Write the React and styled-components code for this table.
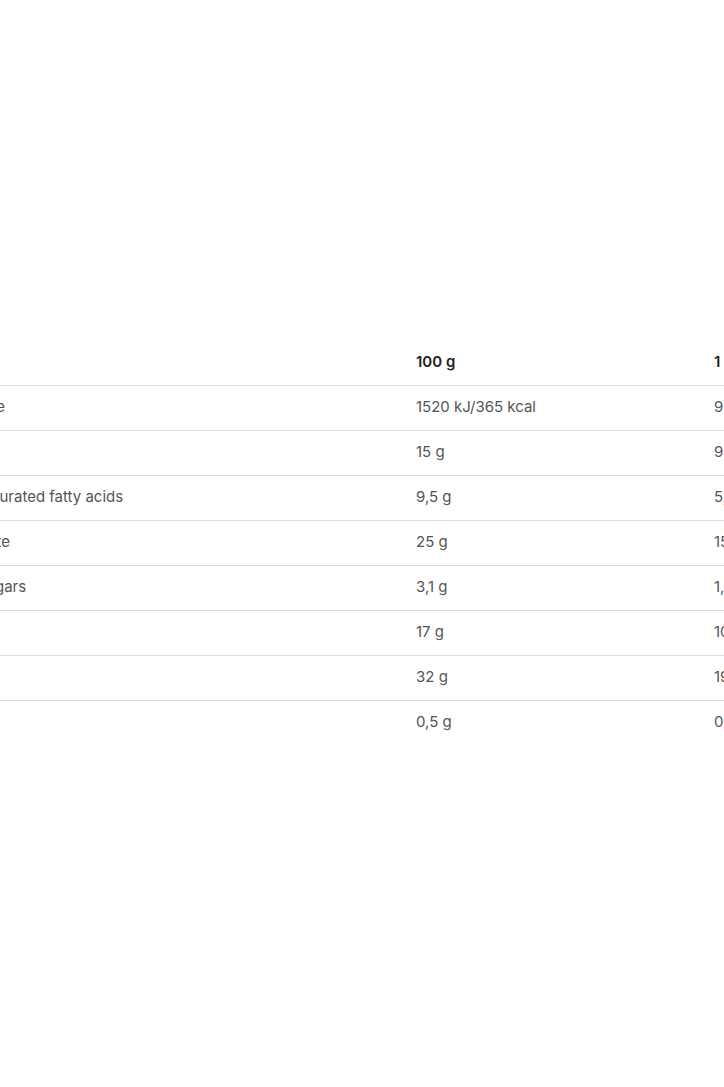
import React from 'react'
import styled, { createGlobalStyle } from 'styled-components'

const GlobalStyle = createGlobalStyle`
  html, body {
    margin: 0;
    padding: 0;
    background: #fff;
    overflow: hidden;
  }
  body {
    font-family: Inter, "Open Sans", sans-serif;
  }
`

const rows = [
  ['Energy value', '1520 kJ/365 kcal', '912 kJ/219 kcal'],
  ['Fat', '15 g', '9 g'],
  ['of which saturated fatty acids', '9,5 g', '5,7 g'],
  ['Carbohydrate', '25 g', '15 g'],
  ['of which sugars', '3,1 g', '1,9 g'],
  ['Fibre', '17 g', '10 g'],
  ['Protein', '32 g', '19 g'],
  ['Salt', '0,5 g', '0,3 g'],
]

function App() {
  return (
    <Page>
      <GlobalStyle />
      <Section>
        <Table>
          <thead>
            <tr>
              <Head $w={503}></Head>
              <Head $w={298}>100 g</Head>
              <Head $w={298}>1 portion (60 g)</Head>
            </tr>
          </thead>
          <tbody>
            {rows.map((r, i) => (
              <Row key={i}>
                <Cell>{r[0]}</Cell>
                <Cell>{r[1]}</Cell>
                <Cell>{r[2]}</Cell>
              </Row>
            ))}
          </tbody>
        </Table>
      </Section>
    </Page>
  )
}

export default App

const Page = styled.div`
  width: 724px;
  height: 1087px;
  overflow: hidden;
  background: #fff;
`

const Section = styled.div`
  padding-top: 340px;
  margin-left: -87px;
`

const Table = styled.table`
  border-collapse: collapse;
  table-layout: fixed;
  width: 1099px;
  font-size: 15px;
`

const Head = styled.th`
  width: ${p => p.$w}px;
  height: 43px;
  padding: 0 0 2px 0;
  text-align: left;
  font-weight: 600;
  color: #222;
  vertical-align: middle;
`

const Row = styled.tr`
  border-top: 1px solid #dedede;
`

const Cell = styled.td`
  height: 40px;
  padding: 0 0 4px 0;
  color: #555;
  font-weight: 400;
  vertical-align: middle;
  white-space: nowrap;
`
